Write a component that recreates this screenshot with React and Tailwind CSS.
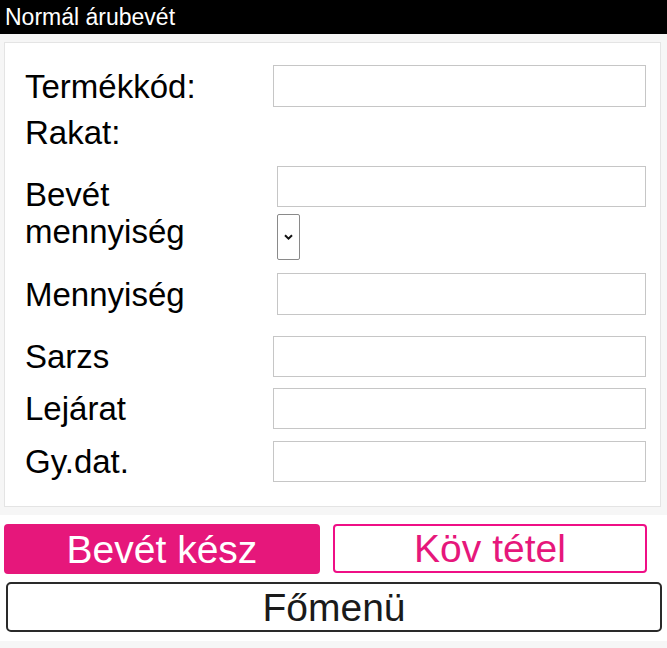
import React from "react";

const font = { fontFamily: '"Liberation Sans", Arial, sans-serif' };

function Input({ className = "" }) {
  return (
    <div className={"h-full border border-[#c6c6c6] bg-white " + className} />
  );
}

export default function App() {
  return (
    <div className="w-[667px] h-[648px] bg-[#f6f6f6] text-black overflow-hidden" style={font}>
      <div className="h-[34px] bg-black text-white text-[23px] leading-[34px] pl-[5px]">
        Normál árubevét
      </div>

      <div className="mt-[8px] ml-[4px] w-[657px] border border-[#e4e4e4] bg-white pl-[20px] pr-[14px] pt-[22px] pb-[24px] text-[33px] leading-[37px]">
        <div className="flex items-center h-[42px]">
          <div className="w-[248px]">Termékkód:</div>
          <div className="flex-1 h-full"><Input /></div>
        </div>

        <div className="mt-[7px] h-[37px]">Rakat:</div>

        <div className="mt-[15px] flex items-center">
          <div className="w-[252px]">
            Bevét
            <br />
            mennyiség
          </div>
          <div className="flex-1 flex flex-col">
            <div className="h-[41px]"><Input /></div>
            <div className="mt-[7px] w-[23px] h-[46px] border border-[#8a8a8a] rounded-[2px] flex items-center justify-center bg-white">
              <svg width="9" height="6" viewBox="0 0 9 6" fill="none">
                <path d="M1 1.2 L4.5 4.6 L8 1.2" stroke="#111" strokeWidth="2" />
              </svg>
            </div>
          </div>
        </div>

        <div className="mt-[13px] flex items-center h-[42px]">
          <div className="w-[252px]">Mennyiség</div>
          <div className="flex-1 h-full"><Input /></div>
        </div>

        <div className="mt-[21px] flex items-center h-[41px]">
          <div className="w-[248px]">Sarzs</div>
          <div className="flex-1 h-full"><Input /></div>
        </div>

        <div className="mt-[11px] flex items-center h-[41px]">
          <div className="w-[248px]">Lejárat</div>
          <div className="flex-1 h-full"><Input /></div>
        </div>

        <div className="mt-[12px] flex items-center h-[41px]">
          <div className="w-[248px]">Gy.dat.</div>
          <div className="flex-1 h-full"><Input /></div>
        </div>
      </div>

      <div className="mt-[8px] h-[126px] bg-white pt-[9px] text-[39px] leading-none">
        <div className="flex">
          <button className="ml-[4px] w-[316px] h-[50px] rounded-[4px] bg-[#e6177b] text-white flex items-center justify-center">
            Bevét kész
          </button>
          <button className="ml-[13px] w-[314px] h-[49px] rounded-[4px] border-2 border-[#ef0f86] bg-white text-[#e6177b] flex items-center justify-center">
            Köv tétel
          </button>
        </div>
        <button className="mt-[8px] ml-[6px] w-[656px] h-[50px] rounded-[5px] border-2 border-[#2a2a2a] bg-white text-[#1a1a1a] flex items-center justify-center">
          Főmenü
        </button>
      </div>
    </div>
  );
}
